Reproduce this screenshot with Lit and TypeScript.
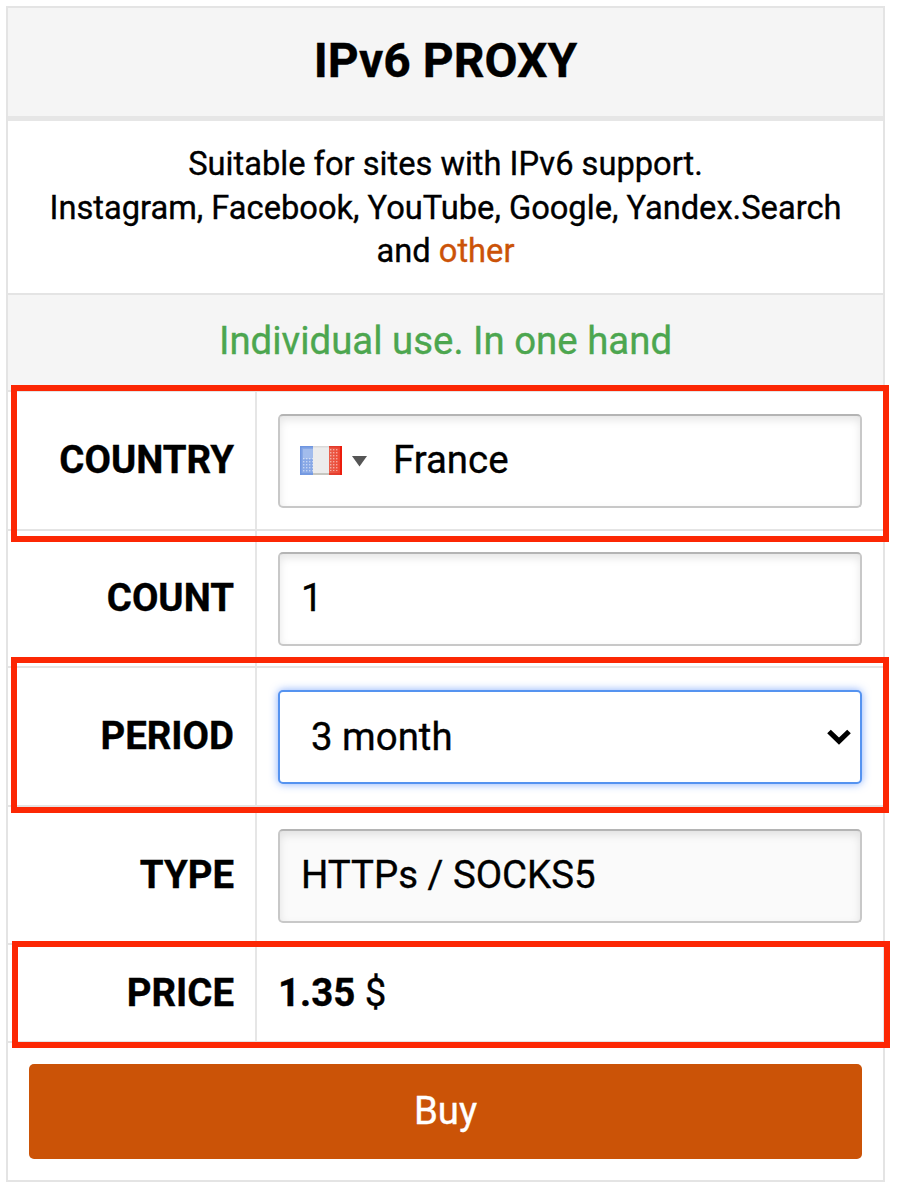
import { LitElement, html, css } from "lit";
import { customElement } from "lit/decorators.js";

@customElement("app-root")
export class AppRoot extends LitElement {
  static styles = css`
    :host {
      display: block;
      position: relative;
      width: 900px;
      height: 1182px;
      box-sizing: border-box;
      padding: 6px 15px 0 6px;
      overflow: hidden;
      background: #fff;
      color: #000;
      font-family: Roboto, "Liberation Sans", sans-serif;
      font-size: 38.4px;
      line-height: 46px;
      -webkit-text-stroke: 0.35px currentColor;
    }
    * { box-sizing: border-box; }
    .card {
      height: 1176px;
      border: 2px solid #e4e4e4;
      display: flex;
      flex-direction: column;
    }
    .title {
      margin: 0;
      height: 113px;
      padding-top: 24px;
      background: #f5f5f5;
      border-bottom: 5px solid #e6e6e6;
      text-align: center;
      font-size: 48px;
      line-height: 58px;
      font-weight: 700;
    }
    .about {
      height: 174px;
      padding-top: 22px;
      border-bottom: 2px solid #e4e4e4;
      text-align: center;
      font-size: 32.65px;
      line-height: 43.6px;
      white-space: nowrap;
    }
    .link { color: #cb5308; }
    .note {
      height: 97px;
      padding-top: 23px;
      background: #f5f5f5;
      border-bottom: 2px solid #e4e4e4;
      color: #4ca64f;
      text-align: center;
    }
    .row {
      display: grid;
      grid-template-columns: 249px 1fr;
      height: 139px;
      border-bottom: 2px solid #e4e4e4;
    }
    .row.short { height: 138px; }
    .row.price { height: 98px; }
    .label {
      border-right: 2px solid #e6e6e6;
      padding: 45px 21px 0 0;
      text-align: right;
      font-weight: 700;
    }
    .cell { padding: 22px 21px 0 21px; }
    .short .cell { padding-top: 21px; }
    .short .label { padding-top: 44px; }
    .row.type .cell { padding-top: 22px; }
    .row.type .label { padding-top: 45px; }
    .price .label, .price .cell { padding-top: 25px; }
    .field {
      height: 94px;
      display: flex;
      align-items: center;
      border: 2px solid #c8c8c8;
      border-top-color: #b4b4b4;
      border-radius: 5px;
      padding: 0 21px 2px;
      background: #fff;
      box-shadow: inset 0 4px 9px rgba(0, 0, 0, 0.1);
    }
    .field.off { background: #fafafa; }
    .field.focus {
      border-color: #5593f0;
      box-shadow: 0 0 9px rgba(70, 130, 250, 0.65);
      padding: 0 8px 0 31px;
      justify-content: space-between;
    }
    .flag { display: block; width: 42px; height: 29px; margin: 2px 0 0 -1px; }
    .caret { display: block; width: 15px; height: 11px; margin: 3px 26px 0 10px; }
    .chevron { display: block; width: 26px; height: 18px; }
    .buy { padding: 21px; }
    .button {
      display: block;
      width: 833px;
      height: 95px;
      border: 0;
      border-radius: 5px;
      padding: 0 0 2px;
      background: #cb5307;
      color: #fff;
      font: inherit;
      -webkit-text-stroke: 0.35px currentColor;
    }
    .mark {
      position: absolute;
      left: 11px;
      width: 878px;
      border: 6px solid #fc2704;
      pointer-events: none;
    }
    .mark.one { top: 385px; height: 157px; }
    .mark.two { top: 657px; height: 156px; }
    .mark.three { left: 12px; top: 941px; height: 107px; }
  `;

  render() {
    return html`
      <div class="card">
        <h1 class="title">IPv6 PROXY</h1>
        <div class="about">
          Suitable for sites with IPv6 support.<br />Instagram, Facebook, YouTube, Google, Yandex.Search<br />and
          <span class="link">other</span>
        </div>
        <div class="note">Individual use. In one hand</div>
        <div class="row">
          <div class="label">COUNTRY</div>
          <div class="cell">
            <div class="field">
              <svg class="flag" viewBox="0 0 42 29">
                <defs>
                  <linearGradient id="red" x1="0" x2="1" y1="0" y2="0">
                    <stop offset="0" stop-color="#e8604e" />
                    <stop offset="1" stop-color="#f0432f" />
                  </linearGradient>
                  <pattern id="grain" width="3" height="3" patternUnits="userSpaceOnUse">
                    <rect width="1.4" height="1.4" fill="#fff" opacity=".5" />
                  </pattern>
                </defs>
                <rect width="13" height="29" fill="#88a8e6" />
                <rect x="13" width="16" height="29" fill="#ececec" />
                <rect x="29" width="13" height="29" fill="url(#red)" />
                <rect x="3" y="3" width="10" height="10" fill="#b4caf0" opacity=".6" />
                <rect x="3" y="12" width="10" height="14" fill="url(#grain)" />
                <rect x="29" y="3" width="10" height="22" fill="url(#grain)" />
                <path d="M13 0.75h16" stroke="#dadada" stroke-width="1.5" />
                <path d="M13 28h16" stroke="#c6c6c0" stroke-width="2" />
                <path d="M41 0v29" stroke="#ec1c0c" stroke-width="2" />
                <path d="M29 0.75h11M29 28h11" stroke="#e2392a" stroke-width="1.5" />
                <path d="M0.75 0v29M0 0.75h13M0 28h13" fill="none" stroke="#6f95e0" stroke-width="1.5" />
              </svg>
              <svg class="caret" viewBox="0 0 15 11"><path d="M0 0h15L7.5 10.5z" fill="#555" /></svg>
              <span>France</span>
            </div>
          </div>
        </div>
        <div class="row short">
          <div class="label">COUNT</div>
          <div class="cell"><div class="field">1</div></div>
        </div>
        <div class="row">
          <div class="label">PERIOD</div>
          <div class="cell">
            <div class="field focus">
              <span>3 month</span>
              <svg class="chevron" viewBox="0 0 26 18">
                <path d="M3 3.5L13 13.2L23 3.5" fill="none" stroke="#000" stroke-width="5.2" />
              </svg>
            </div>
          </div>
        </div>
        <div class="row short type">
          <div class="label">TYPE</div>
          <div class="cell"><div class="field off">HTTPs / SOCKS5</div></div>
        </div>
        <div class="row price">
          <div class="label">PRICE</div>
          <div class="cell"><b>1.35</b> $</div>
        </div>
        <div class="buy"><button class="button">Buy</button></div>
      </div>
      <div class="mark one"></div>
      <div class="mark two"></div>
      <div class="mark three"></div>
    `;
  }
}
